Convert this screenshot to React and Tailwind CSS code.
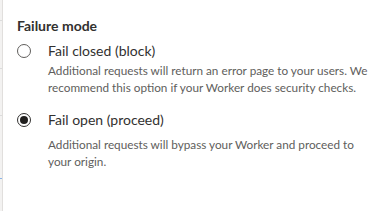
export default function App() {
  const font = { fontFamily: 'Lato, "Liberation Sans", sans-serif' };
  return (
    <div className="flex h-[211px] w-[383px] overflow-hidden bg-white" style={font}>
      <div className="flex w-[3px] shrink-0 flex-col border-r border-[#e1dfdd] bg-[#f3f2f1]">
        <div className="mt-[20px] h-px bg-[#dcdcdc]" />
        <div className="mt-[47px] h-px bg-[#dcdcdc]" />
        <div className="mt-[46px] h-px bg-[#dcdcdc]" />
        <div className="mt-[62px] h-px bg-[#8ab4e8]" />
      </div>
      <div className="flex flex-col pl-[14px] pt-[16px]">
        <h3 className="text-[14px] font-bold leading-[20px] text-[#323130]">Failure mode</h3>
        <label className="mt-[6px] flex items-center">
          <span className="h-[14px] w-[14px] rounded-full border border-[#605e5c]" />
          <span className="ml-[17px] text-[14px] leading-[18px] text-[#323130]">Fail closed (block)</span>
        </label>
        <p className="ml-[31px] mt-[2px] w-[330px] whitespace-nowrap text-[11.75px] leading-[17px] text-[#605e5c]">
          Additional requests will return an error page to your users. We
          <br />
          recommend this option if your Worker does security checks.
        </p>
        <label className="mt-[15px] flex items-center">
          <span className="flex h-[14px] w-[14px] items-center justify-center rounded-full border border-[#323130]">
            <span className="h-[8px] w-[8px] rounded-full bg-[#201f1e]" />
          </span>
          <span className="ml-[17px] text-[14px] leading-[18px] text-[#323130]">Fail open (proceed)</span>
        </label>
        <p className="ml-[31px] mt-[7px] w-[330px] whitespace-nowrap text-[11.75px] leading-[17px] text-[#605e5c]">
          Additional requests will bypass your Worker and proceed to
          <br />
          your origin.
        </p>
      </div>
    </div>
  );
}
